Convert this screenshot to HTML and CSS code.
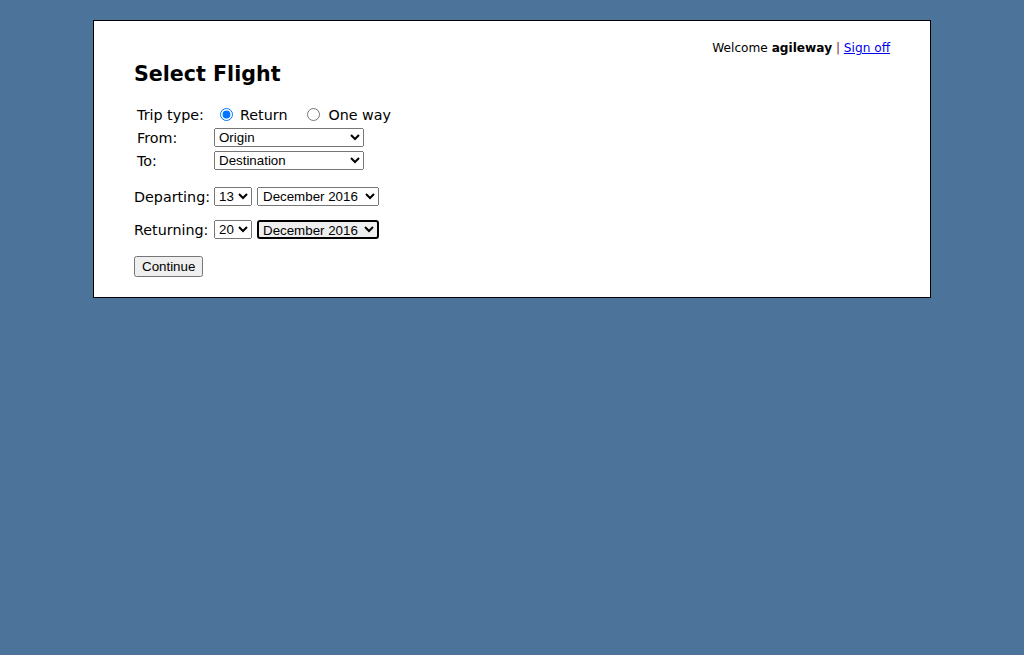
FILE: index.html
```html
<!DOCTYPE html>
<html>
<head>
<meta charset="utf-8">
<title>Select Flight</title>
<link rel="stylesheet" href="styles.css">
</head>
<body>
<div class="page">
  <div class="userbar">Welcome <b>agileway</b> <span class="sep">|</span> <a href="#">Sign off</a></div>
  <h2 class="title">Select Flight</h2>
  <div class="trip-grid">
    <div class="lbl">Trip type:</div>
    <div class="radios">
      <input type="radio" name="trip" class="radio r1" checked><span class="rtext">Return</span>
      <input type="radio" name="trip" class="radio r2"><span class="rtext">One way</span>
    </div>
    <div class="lbl">From:</div>
    <div class="cell"><select class="sel wide"><option>Origin</option></select></div>
    <div class="lbl">To:</div>
    <div class="cell"><select class="sel wide"><option>Destination</option></select></div>
  </div>
  <div class="daterow first">
    <span class="dlbl">Departing:</span>
    <select class="sel day"><option>13</option></select>
    <select class="sel month"><option>December 2016</option></select>
  </div>
  <div class="daterow second">
    <span class="dlbl">Returning:</span>
    <select class="sel day"><option>20</option></select>
    <select class="sel month focused"><option>December 2016</option></select>
  </div>
  <div class="actions"><button class="btn">Continue</button></div>
</div>
</body>
</html>
```
FILE: styles.css
```css
html, body {
  margin: 0;
  padding: 0;
}
body {
  background: #4c7399;
  font-family: "DejaVu Sans", Verdana, sans-serif;
  color: #000;
  padding-top: 20px;
  height: 655px;
  box-sizing: border-box;
}
.page {
  margin: 0 auto;
  background: #fff;
  border: 1px solid #000;
  padding: 20px 40px;
  box-sizing: content-box;
  width: 756px;
}
.userbar {
  text-align: right;
  font-size: 12.15px;
  line-height: 15px;
}
.userbar b { font-weight: bold; }
.sep { color: #7a1f3d; }
.userbar a { color: #0000ee; text-decoration: underline; }
.title {
  font-size: 20.6px;
  line-height: 24px;
  font-weight: bold;
  margin: 6px 0 18px 0;
}
.trip-grid {
  display: grid;
  grid-template-columns: 77px auto;
  grid-auto-rows: 21px;
  row-gap: 2px;
  padding-left: 3px;
  font-size: 14.3px;
  align-items: center;
}
.lbl { line-height: 16px; }
.cell { display: flex; align-items: center; }
.radios { display: flex; align-items: center; font-size: 14.3px; }
.radio {
  width: 13px;
  height: 13px;
  margin: 0;
}
.r1 { margin-left: 6px; margin-right: 7px; }
.r2 { margin-left: 20px; margin-right: 8px; }
.sel {
  font-family: "Liberation Sans", Arial, sans-serif;
  font-size: 13.333px;
  height: 19px;
  margin: 0;
}
.wide { width: 150px; }
.day { width: 38px; }
.month { width: 122px; padding-left: 1px; }
.daterow {
  display: flex;
  align-items: center;
  font-size: 14.3px;
  height: 19px;
}
.daterow .sel + .sel { margin-left: 5px; }
.dlbl { width: 80px; }
.first { margin-top: 16px; }
.second { margin-top: 14px; }
.focused {
  border: 2px solid #000;
  border-radius: 3px;
  padding-left: 0;
  padding-top: 0;
  padding-bottom: 0;
}
.actions { margin-top: 17px; height: 21px; }
.btn {
  font-family: "Liberation Sans", Arial, sans-serif;
  font-size: 13.333px;
  height: 21px;
  margin: 0;
  padding: 1px 6px;
}
```
